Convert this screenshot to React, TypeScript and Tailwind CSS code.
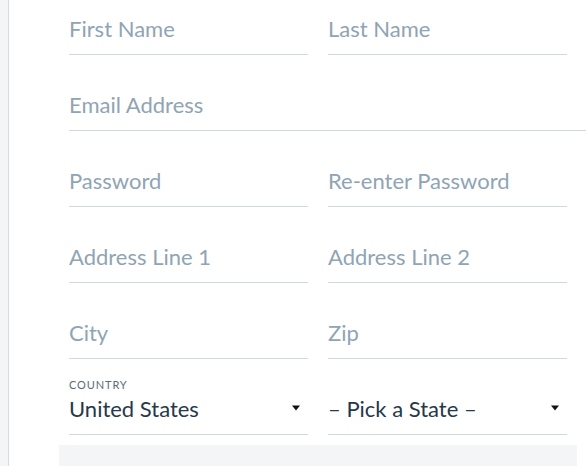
import React from "react";

function Field({ ph, wide }: { ph: string; wide?: boolean }) {
  return (
    <div className={`h-[55px] border-b border-[#cfd9df] pt-[16px] ${wide ? "w-[540px]" : "w-[239px]"}`}>
      <div className="text-[22px] leading-[25px] font-normal text-[#8fa4b4]">{ph}</div>
    </div>
  );
}

function Select({ label, value }: { label?: string; value: string }) {
  return (
    <div className="h-[55px] w-[239px] border-b border-[#cfd9df] flex flex-col">
      <div className="h-[16px] text-[11px] leading-[9px] tracking-[0.08em] text-[#5c6b78]">{label ?? ""}</div>
      <div className="flex items-center justify-between pr-[8px]">
        <span className="text-[22px] leading-[25px] font-normal text-[#26384a]">{value}</span>
        <svg width="8" height="6" viewBox="0 0 8 6" className="-mt-[1px]">
          <path d="M0 0.5 L8 0.5 L4 5.5 Z" fill="#111" />
        </svg>
      </div>
    </div>
  );
}

export default function App() {
  return (
    <div className="w-[586px] h-[466px] overflow-hidden bg-white flex" style={{ fontFamily: "Lato, 'Open Sans', sans-serif" }}>
      <div className="w-[8px] bg-[#f3f5f6] shrink-0" />
      <div className="w-[1px] bg-[#d3dde2] shrink-0" />
      <div className="flex-1 flex flex-col">
        <div className="pl-[60px] flex flex-col gap-[21px]">
          <div className="flex gap-[20px]">
            <Field ph="First Name" />
            <Field ph="Last Name" />
          </div>
          <Field ph="Email Address" wide />
          <div className="flex gap-[20px]">
            <Field ph="Password" />
            <Field ph="Re-enter Password" />
          </div>
          <div className="flex gap-[20px]">
            <Field ph="Address Line 1" />
            <Field ph="Address Line 2" />
          </div>
          <div className="flex gap-[20px]">
            <Field ph="City" />
            <Field ph="Zip" />
          </div>
          <div className="flex gap-[20px]">
            <Select label="COUNTRY" value="United States" />
            <Select value="– Pick a State –" />
          </div>
        </div>
        <div className="ml-[50px] mt-[10px] w-[518px] flex-1 bg-[#f4f5f7]" />
      </div>
    </div>
  );
}
